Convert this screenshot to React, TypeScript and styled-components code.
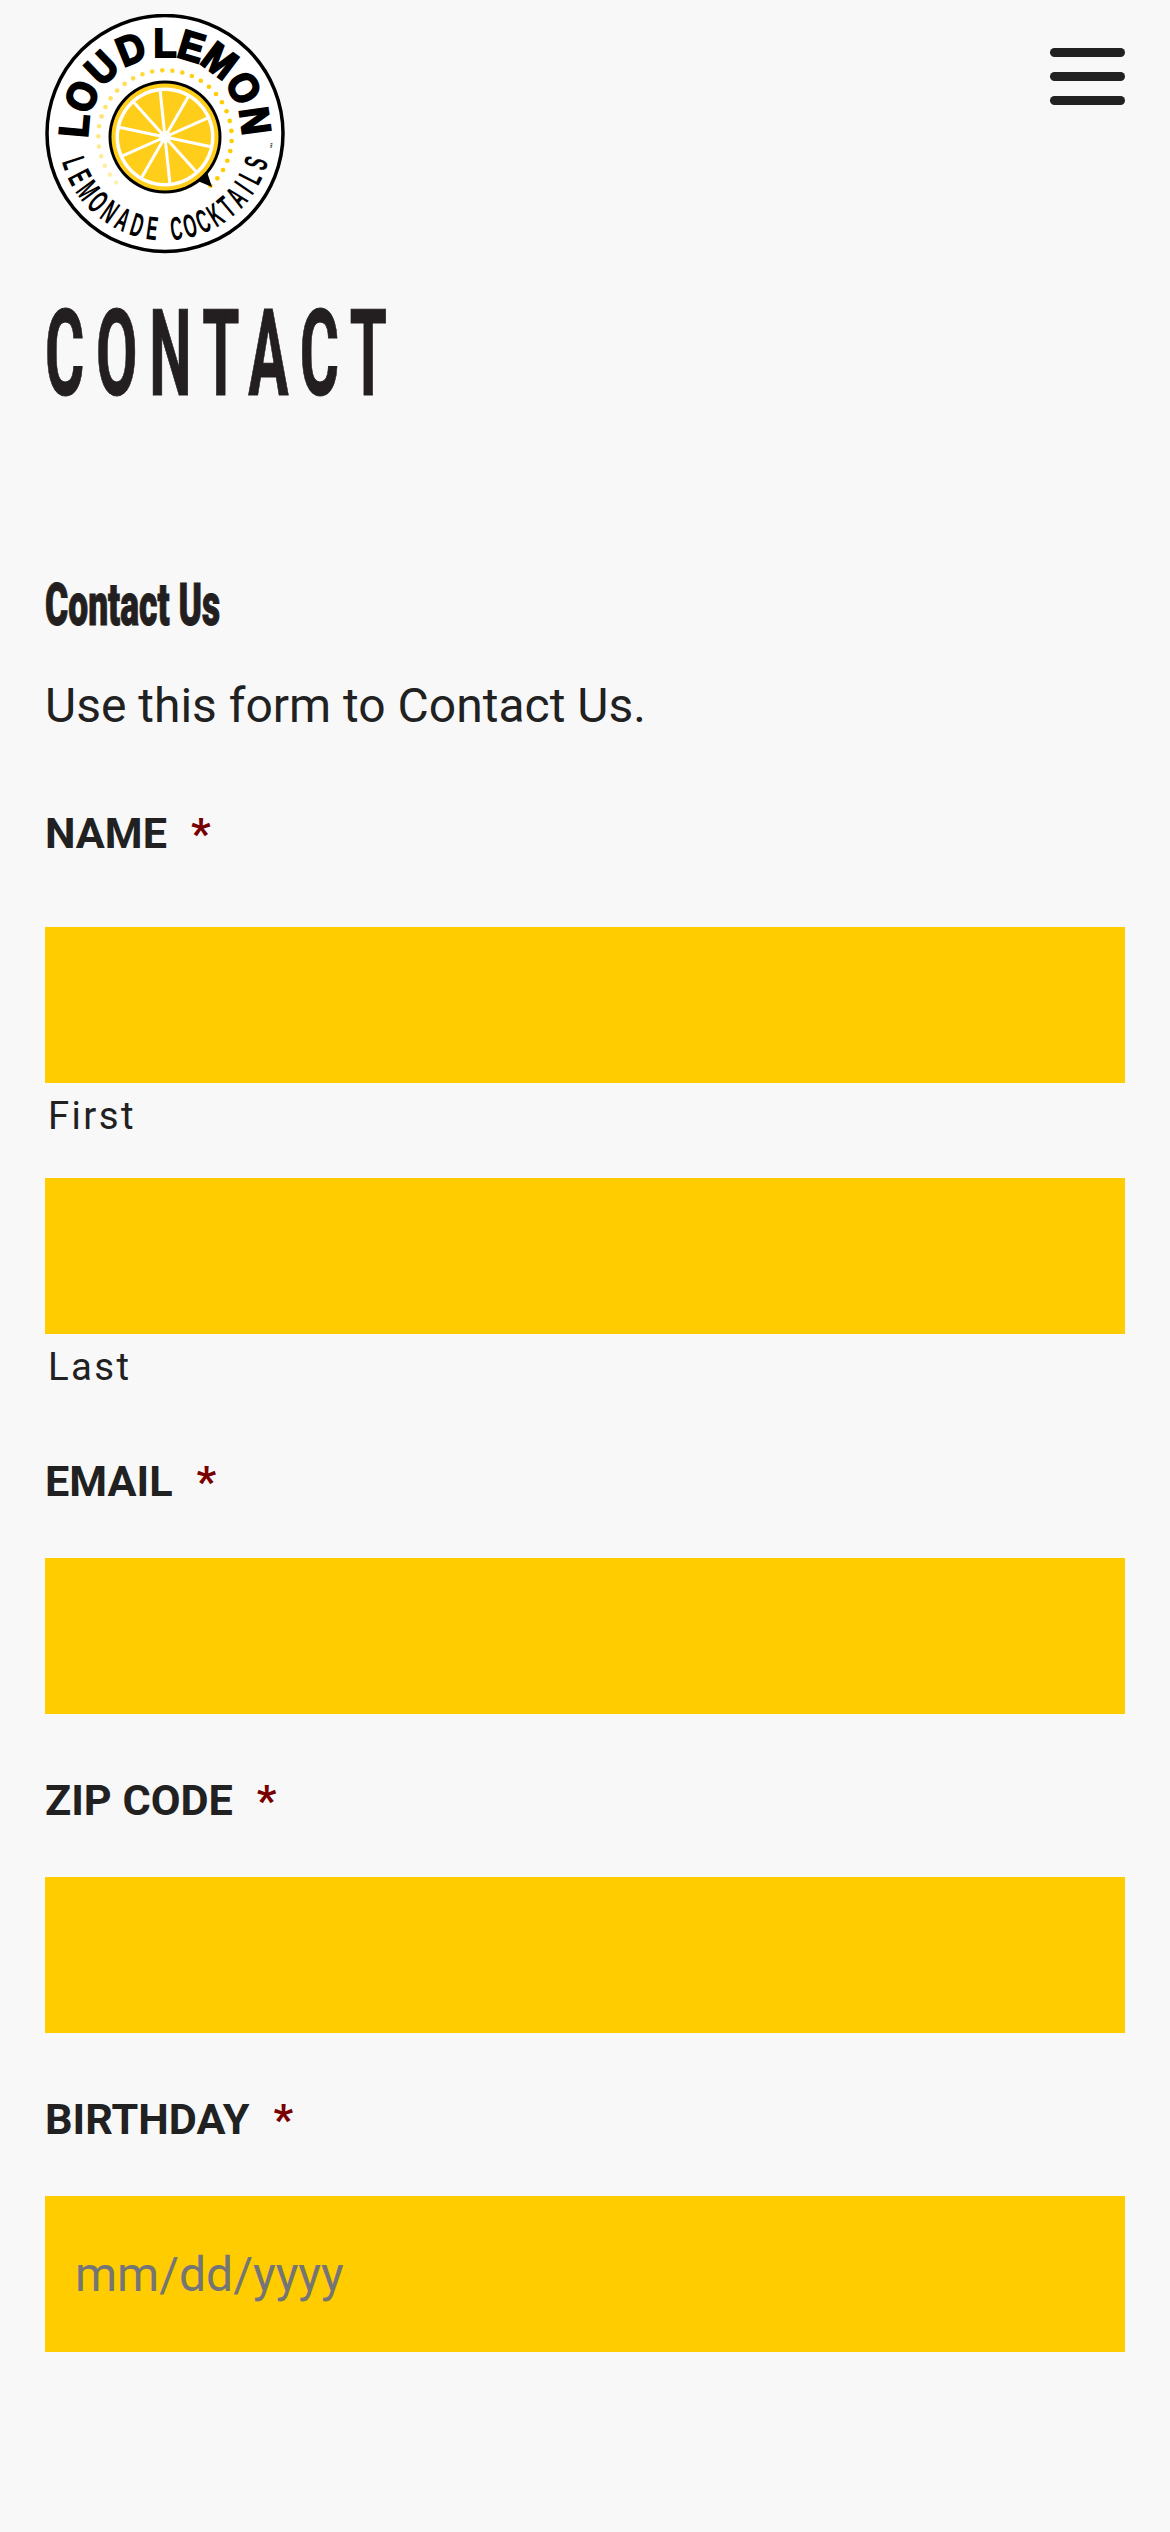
import React from "react";
import styled, { createGlobalStyle } from "styled-components";

const GlobalStyle = createGlobalStyle`
  html, body {
    margin: 0;
    background: #f8f8f8;
  }
  body {
    font-family: Roboto, "Liberation Sans", sans-serif;
    color: #212121;
  }
`;

const Page = styled.div`
  width: 1170px;
  height: 2532px;
  box-sizing: border-box;
  padding: 14px 45px 0;
  overflow: hidden;
`;

const Header = styled.header`
  display: flex;
  justify-content: space-between;
  align-items: flex-start;
`;

const LogoMark = styled.svg`
  display: block;
  width: 240px;
  height: 240px;
`;

const MenuButton = styled.button`
  display: flex;
  flex-direction: column;
  gap: 15px;
  width: 75px;
  margin-top: 34px;
  padding: 0;
  border: 0;
  background: none;
`;

const MenuBar = styled.span`
  display: block;
  height: 9px;
  border-radius: 5px;
  background: #212121;
`;

const PageTitle = styled.h1`
  width: max-content;
  margin: 40px 0 0;
  font-size: 120px;
  line-height: 120px;
  font-weight: 700;
  letter-spacing: 23.5px;
  color: #231f20;
  transform: scaleX(0.5);
  transform-origin: left center;
  -webkit-text-stroke: 1px #231f20;
`;

const SectionTitle = styled.h2`
  width: max-content;
  margin: 161px 0 0;
  font-size: 60px;
  line-height: 60px;
  font-weight: 900;
  color: #231f20;
  transform: scaleX(0.59);
  transform-origin: left center;
  -webkit-text-stroke: 1px #231f20;
`;

const Intro = styled.p`
  margin: 41px 0 0;
  font-size: 48px;
  line-height: 60px;
  font-weight: 400;
  color: #212121;
`;

const Form = styled.form`
  display: flex;
  flex-direction: column;
  margin-top: 73px;
`;

const Field = styled.div<{ $gap?: number }>`
  display: flex;
  flex-direction: column;
  margin-bottom: ${(p) => p.$gap ?? 62}px;
`;

const Label = styled.label<{ $gap?: number }>`
  display: block;
  margin-bottom: ${(p) => p.$gap ?? 51}px;
  font-size: 43.2px;
  line-height: 50px;
  font-weight: 700;
  color: #212121;
`;

const Required = styled.span`
  margin-left: 24px;
  color: #790000;
`;

const TextInput = styled.input`
  display: block;
  width: 100%;
  height: 156px;
  box-sizing: border-box;
  padding: 0 30px;
  border: 0;
  border-radius: 0;
  background: #ffcc00;
  font-family: inherit;
  font-size: 48px;
  color: #212121;

  &::placeholder {
    color: #757575;
    opacity: 1;
  }
`;

const SubField = styled.div`
  display: flex;
  flex-direction: column;
  margin-bottom: 39.5px;

  &:last-child {
    margin-bottom: 0;
  }
`;

const SubLabel = styled.span`
  display: block;
  margin-top: 10px;
  padding-left: 3px;
  font-size: 38.4px;
  line-height: 45px;
  letter-spacing: 2.4px;
  color: #212121;
`;

const LEMON_SPOKES = [-6, 30, 66, 102, 138, 174, 210, 246, 282, 318];

const TOP_LETTERS: [string, number][] = [
  ["L", -85],
  ["O", -66],
  ["U", -44],
  ["D", -22],
  ["L", 0],
  ["E", 17],
  ["M", 37],
  ["O", 60],
  ["N", 82],
];

const BOTTOM_LETTERS: [string, number][] = [
  ["L", -72],
  ["E", -62.8],
  ["M", -53.6],
  ["O", -44.4],
  ["N", -35.2],
  ["A", -26],
  ["D", -16.8],
  ["E", -7.7],
  ["C", 6.8],
  ["O", 15.1],
  ["C", 23.4],
  ["K", 31.7],
  ["T", 40],
  ["A", 48.3],
  ["I", 55.5],
  ["L", 63],
  ["S", 72],
];

const DOTS = Array.from({ length: 32 }, (_, i) => {
  const angle = ((-133 + (i * 270) / 31) * Math.PI) / 180;
  return {
    cx: 120 + 66.7 * Math.sin(angle),
    cy: 123 - 66.7 * Math.cos(angle),
    opacity: 0.3 + 0.7 * Math.min(1, i / 20),
  };
});

function Logo() {
  return (
    <LogoMark viewBox="0 0 240 240" aria-label="Loud Lemon Lemonade Cocktails">
      <circle cx="120" cy="119.5" r="118" fill="#fff" stroke="#000" strokeWidth="3.5" />
      {DOTS.map((dot, i) => (
        <circle key={i} cx={dot.cx} cy={dot.cy} r="2.3" fill="#ffcc00" opacity={dot.opacity} />
      ))}
      <path d="M 148 165 L 167 173 L 160 152 Z" fill="#000" />
      <circle cx="120" cy="123" r="56.5" fill="#000" />
      <circle cx="120" cy="123" r="53.5" fill="#ffce1a" />
      <circle cx="120" cy="123" r="49.5" fill="#fff" />
      <circle cx="120" cy="123" r="46" fill="#ffce1a" />
      {LEMON_SPOKES.map((deg) => (
        <line
          key={deg}
          x1="120"
          y1="123"
          x2={120 + 47 * Math.sin((deg * Math.PI) / 180)}
          y2={123 - 47 * Math.cos((deg * Math.PI) / 180)}
          stroke="#fff"
          strokeWidth="3"
        />
      ))}
      <circle cx="120" cy="123" r="6" fill="#fff" />
      <g fontFamily="'Liberation Sans', sans-serif" fontWeight="700" textAnchor="middle" fill="#000">
        {TOP_LETTERS.map(([ch, deg], i) => (
          <text
            key={i}
            fontSize="41"
            stroke="#000"
            strokeWidth="2.2"
            transform={`rotate(${deg} 120 119.5) translate(120 42.5) scale(0.92 1)`}
          >
            {ch}
          </text>
        ))}
        {BOTTOM_LETTERS.map(([ch, deg], i) => (
          <text
            key={i}
            fontSize="33"
            transform={`rotate(${-deg} 120 119.5) translate(120 226.5) scale(0.5 1)`}
          >
            {ch}
          </text>
        ))}
        <text fontSize="6" transform="translate(223 131) rotate(95)">
          ™
        </text>
      </g>
    </LogoMark>
  );
}

export default function App() {
  return (
    <>
      <GlobalStyle />
      <Page>
        <Header>
          <Logo />
          <MenuButton type="button" aria-label="Menu">
            <MenuBar />
            <MenuBar />
            <MenuBar />
          </MenuButton>
        </Header>
        <PageTitle>CONTACT</PageTitle>
        <SectionTitle>Contact Us</SectionTitle>
        <Intro>Use this form to Contact Us.</Intro>
        <Form>
          <Field $gap={68.5}>
            <Label $gap={68}>
              NAME<Required>*</Required>
            </Label>
            <SubField>
              <TextInput type="text" aria-label="First" />
              <SubLabel>First</SubLabel>
            </SubField>
            <SubField>
              <TextInput type="text" aria-label="Last" />
              <SubLabel>Last</SubLabel>
            </SubField>
          </Field>
          <Field>
            <Label>
              EMAIL<Required>*</Required>
            </Label>
            <TextInput type="text" aria-label="Email" />
          </Field>
          <Field>
            <Label>
              ZIP CODE<Required>*</Required>
            </Label>
            <TextInput type="text" aria-label="Zip code" />
          </Field>
          <Field>
            <Label>
              BIRTHDAY<Required>*</Required>
            </Label>
            <TextInput type="text" placeholder="mm/dd/yyyy" aria-label="Birthday" />
          </Field>
        </Form>
      </Page>
    </>
  );
}
